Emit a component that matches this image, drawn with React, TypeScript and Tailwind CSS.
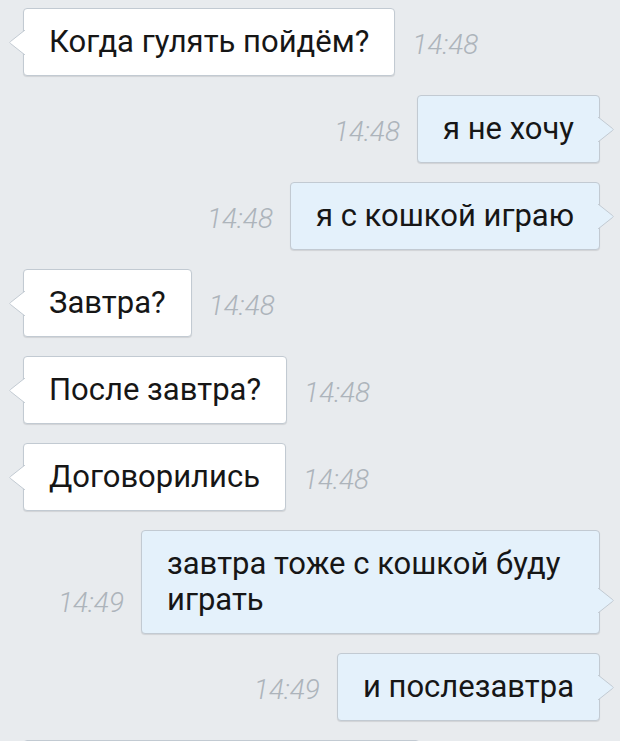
import React from 'react';

type Msg = { text: React.ReactNode; time: string; out?: boolean };

const messages: Msg[] = [
  { text: 'Когда гулять пойдём?', time: '14:48' },
  { text: 'я не хочу', time: '14:48', out: true },
  { text: 'я с кошкой играю', time: '14:48', out: true },
  { text: 'Завтра?', time: '14:48' },
  { text: 'После завтра?', time: '14:48' },
  { text: 'Договорились', time: '14:48' },
  { text: 'завтра тоже с кошкой буду играть', time: '14:49', out: true },
  { text: 'и послезавтра', time: '14:49', out: true },
];

const Tail: React.FC<{ out?: boolean }> = ({ out }) =>
  out ? (
    <svg
      className="absolute right-[-15px] bottom-[20px]"
      width="16"
      height="25"
      viewBox="0 0 16 25"
    >
      <path d="M0 0 L14.5 11.5 Q16 12.5 14.5 13.5 L0 25" fill="#e4f1fb" stroke="#c2cad2" strokeWidth="1" />
    </svg>
  ) : (
    <svg
      className="absolute left-[-15px] bottom-[20px]"
      width="16"
      height="25"
      viewBox="0 0 16 25"
    >
      <path d="M16 0 L1.5 11.5 Q0 12.5 1.5 13.5 L16 25" fill="#ffffff" stroke="#c2cad2" strokeWidth="1" />
    </svg>
  );

const Time: React.FC<{ t: string }> = ({ t }) => (
  <span className="pb-[15px] text-[28px] leading-[32px] font-light italic text-[#adb4bb] shrink-0">{t}</span>
);

const Bubble: React.FC<{ msg: Msg }> = ({ msg }) => (
  <div
    className={`relative max-w-[459px] rounded-[4px] border border-[#c2cad2] px-[25px] py-[15px] text-[31px] leading-[36px] text-[#161616] shadow-[0_1px_1px_rgba(0,0,0,0.1)] ${
      msg.out ? 'bg-[#e4f1fb]' : 'bg-white'
    }`}
  >
    {msg.text}
    <Tail out={msg.out} />
  </div>
);

export default function App() {
  return (
    <div
      className="h-[741px] w-[620px] overflow-hidden bg-[#e8ebee] pt-[8px]"
      style={{ fontFamily: 'Roboto, "Noto Sans", sans-serif' }}
    >
      <div className="flex flex-col gap-[19px]">
        {messages.map((m, i) =>
          m.out ? (
            <div key={i} className="flex items-end justify-end gap-[17px] pr-[20px]">
              <Time t={m.time} />
              <Bubble msg={m} />
            </div>
          ) : (
            <div key={i} className="flex items-end justify-start gap-[17px] pl-[23px]">
              <Bubble msg={m} />
              <Time t={m.time} />
            </div>
          )
        )}
        <div className="flex pl-[23px]">
          <div className="h-[66px] w-[397px] rounded-[4px] border border-[#c2cad2] bg-white" />
        </div>
      </div>
    </div>
  );
}
